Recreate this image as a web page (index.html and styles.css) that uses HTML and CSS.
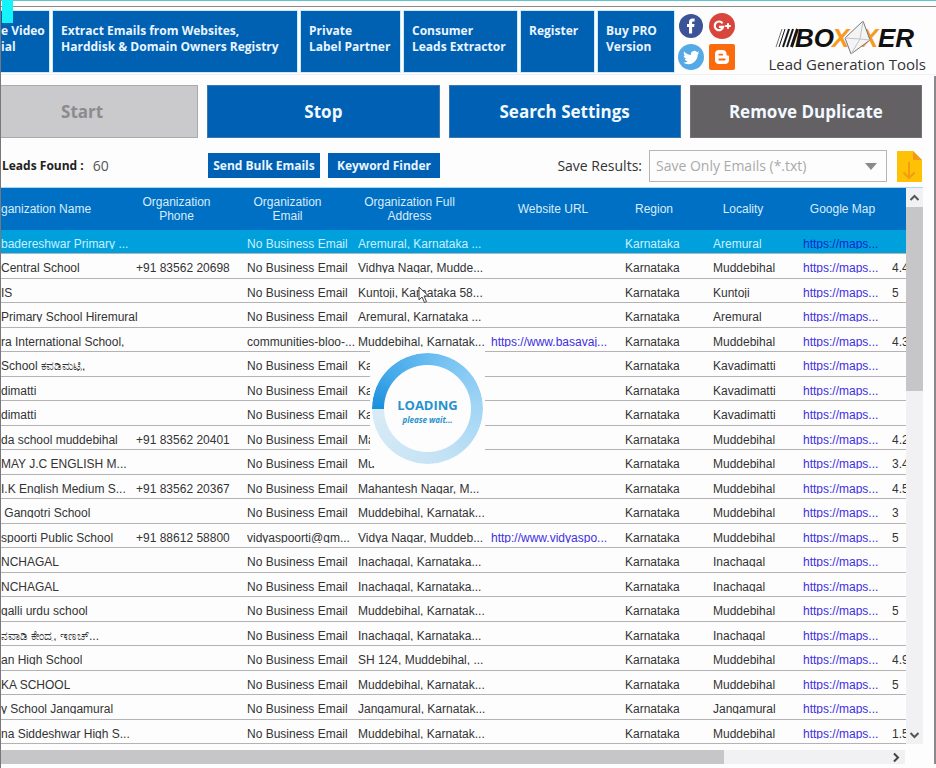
FILE: index.html
```html
<!DOCTYPE html>
<html lang="en">
<head>
<meta charset="utf-8">
<title>Boxxer Lead Generation Tools</title>
<link rel="stylesheet" href="styles.css">
</head>
<body>
<div class="window">
  <div class="title-edge"></div>
  <div class="marker"></div>
  <header class="topbar">
    <nav class="tiles">
      <button class="tile tile-video">e Video<br>ial</button>
      <button class="tile tile-extract">Extract Emails from Websites,<br>Harddisk &amp; Domain Owners Registry</button>
      <button class="tile tile-partner">Private<br>Label Partner</button>
      <button class="tile tile-consumer">Consumer<br>Leads Extractor</button>
      <button class="tile tile-register">Register</button>
      <button class="tile tile-pro">Buy PRO<br>Version</button>
    </nav>
    <div class="social">
      <a href="#" aria-label="Facebook"><svg width="26" height="26" viewBox="0 0 26 26"><circle cx="13" cy="13" r="12" fill="#3b5499"/><path d="M11 20.500V14H9v-2.900h2V9.300C11 6.900 12.300 5.600 14.500 5.600h2.100v2.800h-1.300c-1 0-1.200.500-1.200 1.300v1.400h2.400l-.4 2.900h-2v6.500z" fill="#fff"/></svg></a>
      <a href="#" aria-label="Google Plus"><svg width="26" height="26" viewBox="0 0 26 26"><circle cx="13" cy="13" r="13" fill="#d9453d"/><path d="M13.500 10.300A4.300 4.300 0 1 0 14.200 13.800H10" fill="none" stroke="#fff" stroke-width="2.200"/><path d="M19 10.200v5.600M16.200 13h5.600" stroke="#fff" stroke-width="2"/></svg></a>
      <a href="#" aria-label="Twitter"><svg width="26" height="26" viewBox="0 0 26 26"><circle cx="13" cy="13" r="13" fill="#55aae6"/><path d="M21.500 8.400c-.6.300-1.200.500-1.900.600.700-.4 1.200-1 1.400-1.800-.6.400-1.300.600-2.100.8A3.400 3.400 0 0 0 13 11.100C10.300 11 7.900 9.700 6.200 7.600c-.9 1.500-.4 3.400 1 4.400-.5 0-1-.2-1.500-.4 0 1.600 1.100 2.900 2.600 3.300-.5.100-1 .1-1.500 0 .4 1.300 1.600 2.300 3.100 2.300-1.400 1.100-3.100 1.600-4.900 1.400 6.800 4.200 14.800-.3 14.800-8.500.7-.4 1.300-1 1.700-1.700z" fill="#fff"/></svg></a>
      <a href="#" aria-label="Blogger"><svg width="26" height="26" viewBox="0 0 26 26"><rect width="26" height="26" rx="2" fill="#fb6a0c"/><path d="M10 6h3.500c2.400 0 4 1.600 4 4 0 1.200.4 1.600 1.300 1.600.9 0 1.200.5 1.200 1.200V16c0 2.400-1.600 4-4 4h-6c-2.400 0-4-1.600-4-4v-6c0-2.400 1.600-4 4-4z" fill="#fff"/><path d="M10.300 10.600h3M10.300 15.500h5.400" stroke="#fb6a0c" stroke-width="1.800" stroke-linecap="round"/></svg></a>
    </div>
    <div class="brand">
      <svg class="brand-mark" width="144" height="36" viewBox="0 0 144 36" role="img" aria-label="Boxxer">
        <g stroke="#161616"><path d="M7 9L1 27" stroke-width="1" stroke="#777"/><path d="M10 9L4 27" stroke-width="1"/><path d="M14 9L8 27" stroke-width="2"/><path d="M18 9L12 27" stroke-width="2"/><path d="M22.500 9L16.500 27" stroke-width="3"/></g>
        <text class="brand-dark" x="20" y="27">BO</text>
        <text class="brand-orange" x="57" y="27">X</text>
        <text class="brand-orange" x="86" y="27">X</text>
        <text class="brand-dark" x="103" y="27">ER</text>
        <path d="M88 1L95 20L76 34L70 18z" fill="#f4f4f4" stroke="#777" stroke-width="1"/>
        <path d="M88 1L85 19L95 20M70 18L85 19L76 34" fill="none" stroke="#c4c4c4" stroke-width="1"/>
      </svg>
      <div class="brand-tag">Lead Generation Tools</div>
    </div>
  </header>

  <div class="actions">
    <button class="action action-start" disabled>Start</button>
    <button class="action">Stop</button>
    <button class="action">Search Settings</button>
    <button class="action action-dup">Remove Duplicate</button>
  </div>

  <div class="tools">
    <div class="found"><b>Leads Found :</b><span>60</span></div>
    <div class="small-actions">
      <button class="small">Send Bulk Emails</button>
      <button class="small">Keyword Finder</button>
    </div>
    <div class="save">
      <label for="save-as">Save Results:</label>
      <div class="select-box">
        <select id="save-as"><option>Save Only Emails (*.txt)</option></select>
        <svg class="select-arrow" width="12" height="7" viewBox="0 0 12 7"><path d="M0 0h12L6 7z" fill="#8a8a8a"/></svg>
      </div>
      <button class="export" aria-label="Export"><svg width="25" height="32" viewBox="0 0 25 32"><path d="M0 1h16l9 9v22H0z" fill="#fec106"/><path d="M16 1l9 9h-9z" fill="#f29b14"/><path d="M12 12v16M6.500 22.500L12 28l5.500-5.500" fill="none" stroke="#f39c12" stroke-width="2"/></svg></button>
    </div>
  </div>

  <main class="results">
    <div class="grid-view">
      <table>
        <colgroup><col class="c-name"><col class="c-phone"><col class="c-email"><col class="c-address"><col class="c-url"><col class="c-region"><col class="c-locality"><col class="c-map"><col></colgroup>
        <thead><tr><th class="h-name">ganization Name</th><th>Organization<br>Phone</th><th>Organization<br>Email</th><th>Organization Full<br>Address</th><th class="h-snug">Website URL</th><th>Region</th><th>Locality</th><th class="h-snug">Google Map</th><th></th></tr></thead>
        <tbody>
          <tr class="selected"><td><span>badereshwar Primary ...</span></td><td></td><td><span>No Business Email</span></td><td><span>Aremural, Karnataka ...</span></td><td></td><td><span>Karnataka</span></td><td><span>Aremural</span></td><td><a href="#">https://maps...</a></td><td></td></tr>
          <tr><td><span>Central School</span></td><td><span>+91 83562 20698</span></td><td><span>No Business Email</span></td><td><span>Vidhya Nagar, Mudde...</span></td><td></td><td><span>Karnataka</span></td><td><span>Muddebihal</span></td><td><a href="#">https://maps...</a></td><td><span>4.4</span></td></tr>
          <tr><td><span>IS</span></td><td></td><td><span>No Business Email</span></td><td><span>Kuntoji, Karnataka 58...</span></td><td></td><td><span>Karnataka</span></td><td><span>Kuntoji</span></td><td><a href="#">https://maps...</a></td><td><span>5</span></td></tr>
          <tr><td><span>Primary School Hiremural</span></td><td></td><td><span>No Business Email</span></td><td><span>Aremural, Karnataka ...</span></td><td></td><td><span>Karnataka</span></td><td><span>Aremural</span></td><td><a href="#">https://maps...</a></td><td></td></tr>
          <tr><td><span>ra International School,</span></td><td></td><td><span>communities-bloo-...</span></td><td><span>Muddebihal, Karnatak...</span></td><td><a href="#">https://www.basavaj...</a></td><td><span>Karnataka</span></td><td><span>Muddebihal</span></td><td><a href="#">https://maps...</a></td><td><span>4.3</span></td></tr>
          <tr><td><span>School ಕವಡಿಮಟ್ಟಿ,</span></td><td></td><td><span>No Business Email</span></td><td><span>Ka</span></td><td></td><td><span>Karnataka</span></td><td><span>Kavadimatti</span></td><td><a href="#">https://maps...</a></td><td></td></tr>
          <tr><td><span>dimatti</span></td><td></td><td><span>No Business Email</span></td><td><span>Ka</span></td><td></td><td><span>Karnataka</span></td><td><span>Kavadimatti</span></td><td><a href="#">https://maps...</a></td><td></td></tr>
          <tr><td><span>dimatti</span></td><td></td><td><span>No Business Email</span></td><td><span>Ka</span></td><td></td><td><span>Karnataka</span></td><td><span>Kavadimatti</span></td><td><a href="#">https://maps...</a></td><td></td></tr>
          <tr><td><span>da school muddebihal</span></td><td><span>+91 83562 20401</span></td><td><span>No Business Email</span></td><td><span>Ma</span></td><td></td><td><span>Karnataka</span></td><td><span>Muddebihal</span></td><td><a href="#">https://maps...</a></td><td><span>4.2</span></td></tr>
          <tr><td><span>MAY J.C ENGLISH M...</span></td><td></td><td><span>No Business Email</span></td><td><span>Mu</span></td><td></td><td><span>Karnataka</span></td><td><span>Muddebihal</span></td><td><a href="#">https://maps...</a></td><td><span>3.4</span></td></tr>
          <tr><td><span>I.K English Medium S...</span></td><td><span>+91 83562 20367</span></td><td><span>No Business Email</span></td><td><span>Mahantesh Nagar, M...</span></td><td></td><td><span>Karnataka</span></td><td><span>Muddebihal</span></td><td><a href="#">https://maps...</a></td><td><span>4.5</span></td></tr>
          <tr><td><span>&nbsp;Gangotri School</span></td><td></td><td><span>No Business Email</span></td><td><span>Muddebihal, Karnatak...</span></td><td></td><td><span>Karnataka</span></td><td><span>Muddebihal</span></td><td><a href="#">https://maps...</a></td><td><span>3</span></td></tr>
          <tr><td><span>spoorti Public School</span></td><td><span>+91 88612 58800</span></td><td><span>vidyaspoorti@gm...</span></td><td><span>Vidya Nagar, Muddeb...</span></td><td><a href="#">http://www.vidyaspo...</a></td><td><span>Karnataka</span></td><td><span>Muddebihal</span></td><td><a href="#">https://maps...</a></td><td><span>5</span></td></tr>
          <tr><td><span>NCHAGAL</span></td><td></td><td><span>No Business Email</span></td><td><span>Inachagal, Karnataka...</span></td><td></td><td><span>Karnataka</span></td><td><span>Inachagal</span></td><td><a href="#">https://maps...</a></td><td></td></tr>
          <tr><td><span>NCHAGAL</span></td><td></td><td><span>No Business Email</span></td><td><span>Inachagal, Karnataka...</span></td><td></td><td><span>Karnataka</span></td><td><span>Inachagal</span></td><td><a href="#">https://maps...</a></td><td></td></tr>
          <tr><td><span>galli urdu school</span></td><td></td><td><span>No Business Email</span></td><td><span>Muddebihal, Karnatak...</span></td><td></td><td><span>Karnataka</span></td><td><span>Muddebihal</span></td><td><a href="#">https://maps...</a></td><td><span>5</span></td></tr>
          <tr><td><span>ನವಾಡಿ ಕೇಂದ್ರ, ಇಣಚ್...</span></td><td></td><td><span>No Business Email</span></td><td><span>Inachagal, Karnataka...</span></td><td></td><td><span>Karnataka</span></td><td><span>Inachagal</span></td><td><a href="#">https://maps...</a></td><td></td></tr>
          <tr><td><span>an High School</span></td><td></td><td><span>No Business Email</span></td><td><span>SH 124, Muddebihal, ...</span></td><td></td><td><span>Karnataka</span></td><td><span>Muddebihal</span></td><td><a href="#">https://maps...</a></td><td><span>4.9</span></td></tr>
          <tr><td><span>KA SCHOOL</span></td><td></td><td><span>No Business Email</span></td><td><span>Muddebihal, Karnatak...</span></td><td></td><td><span>Karnataka</span></td><td><span>Muddebihal</span></td><td><a href="#">https://maps...</a></td><td><span>5</span></td></tr>
          <tr><td><span>y School Jangamural</span></td><td></td><td><span>No Business Email</span></td><td><span>Jangamural, Karnatak...</span></td><td></td><td><span>Karnataka</span></td><td><span>Jangamural</span></td><td><a href="#">https://maps...</a></td><td></td></tr>
          <tr><td><span>na Siddeshwar High S...</span></td><td></td><td><span>No Business Email</span></td><td><span>Muddebihal, Karnatak...</span></td><td></td><td><span>Karnataka</span></td><td><span>Muddebihal</span></td><td><a href="#">https://maps...</a></td><td><span>1.5</span></td></tr>
        </tbody>
      </table>
      <div class="loader"><div class="ring"></div><div class="loader-text"><strong>LOADING</strong><em>please wait...</em></div></div>
      <svg class="cursor" width="12" height="18" viewBox="0 0 12 18"><path d="M1 1v13l3-3 2.500 5.500 2-1L6 10h4.500z" fill="#fff" stroke="#444" stroke-width="1"/></svg>
    </div>
    <div class="vscroll">
      <svg width="17" height="19" viewBox="0 0 17 19"><path d="M4.500 12L8.500 8l4 4" fill="none" stroke="#555" stroke-width="2"/></svg>
      <div class="vthumb"></div>
      <svg width="17" height="19" viewBox="0 0 17 19"><path d="M4.500 8l4 4 4-4" fill="none" stroke="#555" stroke-width="2"/></svg>
    </div>
  </main>
  <div class="hscroll">
    <div class="hthumb"></div>
    <svg width="17" height="14" viewBox="0 0 17 14"><path d="M6 3.500L10 7.500l-4 4" fill="none" stroke="#444" stroke-width="2"/></svg>
  </div>
  <div class="window-edge"></div>
</div>
</body>
</html>
```
FILE: styles.css
```css
* { box-sizing: border-box; }
body { margin: 0; background: #fdfdfe; font-family: "Open Sans", "Noto Sans", sans-serif; color: #333; overflow: hidden; }
button { border: 0; margin: 0; padding: 0; font: inherit; color: inherit; }
svg { display: block; }
.window { position: relative; border-left: 1px solid #77777c; overflow: hidden; }
.window-edge { position: absolute; right: 0; top: 76px; bottom: 4px; width: 2px; background: #8b898d; }
.title-edge { height: 7px; border-top: 1px solid #62c3cc; border-bottom: 1px solid #8b8886; }
.marker { position: absolute; left: 1px; top: 0; width: 11px; height: 23px; background: #14f3fb; }

.topbar { display: flex; height: 68px; border-bottom: 1px solid #f0eff3; }
.tiles { display: flex; gap: 4px; padding-top: 4px; }
.tile { height: 61px; padding: 12px 8px; background: #0060b2; color: #e9f5ff; font-size: 12px; font-weight: 700; line-height: 16px; text-align: left; white-space: nowrap; display: flex; align-items: flex-start; box-shadow: 0 0 0 1px #c9ecfa; }
.tile-video { width: 48px; padding-left: 0; }
.tile-extract { width: 244px; }
.tile-partner { width: 99px; }
.tile-consumer { width: 113px; }
.tile-register { width: 73px; }
.tile-pro { width: 76px; }
.social { display: grid; grid-template-columns: 26px 26px; gap: 5px; align-content: start; padding: 6px 0 0 4px; }
.brand { margin-left: auto; padding: 13px 10px 0 0; display: flex; flex-direction: column; align-items: center; }
.brand-mark text { font-family: "Liberation Sans", Arial, sans-serif; font-size: 26px; font-weight: 700; font-style: italic; }
.brand-dark { fill: #111; }
.brand-orange { fill: #f89a1c; }
.brand-tag { font-size: 15px; line-height: 16px; color: #333; white-space: nowrap; }

.actions { display: flex; gap: 9px; margin: 10px 14px 0 -35px; }
.action { flex: 1 1 0; height: 53px; background: #0060b4; color: #f2f9ff; border: 1px solid #3c78ac; font-size: 17px; font-weight: 700; }
.action-start { background: #cac9cb; color: #8c8b8d; border-color: #aaa9ab; }
.action-dup { background: #636164; border-color: #737174; }

.tools { display: flex; align-items: center; height: 49px; padding: 10px 14px 4px 1px; }
.found { width: 206px; display: flex; gap: 9px; align-items: center; font-size: 12px; color: #222; }
.found span { font-size: 14px; color: #555; }
.small-actions { display: flex; gap: 8px; }
.small { width: 112px; height: 25px; background: #0060b4; color: #e9f5ff; font-size: 12px; font-weight: 700; white-space: nowrap; }
.save { margin-left: auto; display: flex; align-items: center; font-size: 14px; white-space: nowrap; }
.select-box { position: relative; margin: 0 10px 0 7px; }
.select-box select { appearance: none; width: 238px; height: 32px; padding: 0 6px; border: 1px solid #b5b4b6; border-radius: 0; background: #fdfdfe; color: #aaa; font: 14px "Open Sans", sans-serif; }
.select-arrow { position: absolute; right: 10px; top: 13px; }
.export { background: none; }

.results { display: flex; margin-right: 13px; border-top: 1px solid #a9d8f3; }
.grid-view { position: relative; flex: 1; overflow: hidden; }
table { width: 100%; table-layout: fixed; border-collapse: separate; border-spacing: 0; font: 12px/14px "Liberation Sans", Arial, sans-serif; color: #333; }
.c-name { width: 132px; }
.c-phone, .c-email { width: 111px; }
.c-address { width: 133px; }
.c-url { width: 134px; }
.c-region { width: 88px; }
.c-locality { width: 90px; }
.c-map { width: 89px; }
th { height: 42px; padding: 0 24px 0 0; background: #0070c4; color: #d8ecfb; font-weight: 400; text-align: center; vertical-align: middle; white-space: nowrap; }
.h-name { text-align: left; padding: 0; }
.h-snug { padding: 0 4px 0 0; }
td { height: 24px; padding: 7px 0 0 3px; border-bottom: 1px solid #b5b2b4; vertical-align: top; white-space: nowrap; }
tr:nth-child(even) td { height: 25px; }
td:first-child { padding-left: 0; }
/* The grid trims the descenders of its cell text. */
td span, td a { display: inline-block; height: 14px; clip-path: inset(0 0 2px 0); }
td a { color: #3d2fe0; text-decoration: none; }
.selected td { background: #00a0dc; color: #c8f0ff; }
.selected a { color: #0a2ad0; }

.loader { position: absolute; left: 369px; top: 163px; width: 115px; height: 115px; display: grid; place-items: center; background: #fdfdfe; }
.ring { grid-area: 1 / 1; width: 111px; height: 111px; border-radius: 50%; background: conic-gradient(from 270deg, #1c8fdd, #46aaea 12%, #74c2f2 30%, #a3d6f5 50%, #c3e2f5 70%, #d9ebf5); mask: radial-gradient(circle, transparent 43px, #000 44px); }
.loader-text { grid-area: 1 / 1; padding-top: 6px; display: flex; flex-direction: column; align-items: center; color: #2792cd; }
.loader-text strong { font-size: 13px; line-height: 16px; }
.loader-text em { font-size: 8px; line-height: 14px; font-weight: 700; }
.cursor { position: absolute; left: 417px; top: 98px; }

.vscroll { width: 17px; display: flex; flex-direction: column; background: #f1f1f3; }
.vthumb { height: 184px; margin: 0 0 auto; background: #c6c5c8; }
.hscroll { display: flex; align-items: center; justify-content: space-between; margin: 6px 31px 4px 0; height: 14px; background: #f1f1f3; }
.hthumb { width: 80%; height: 14px; background: #c6c5c8; }
```
